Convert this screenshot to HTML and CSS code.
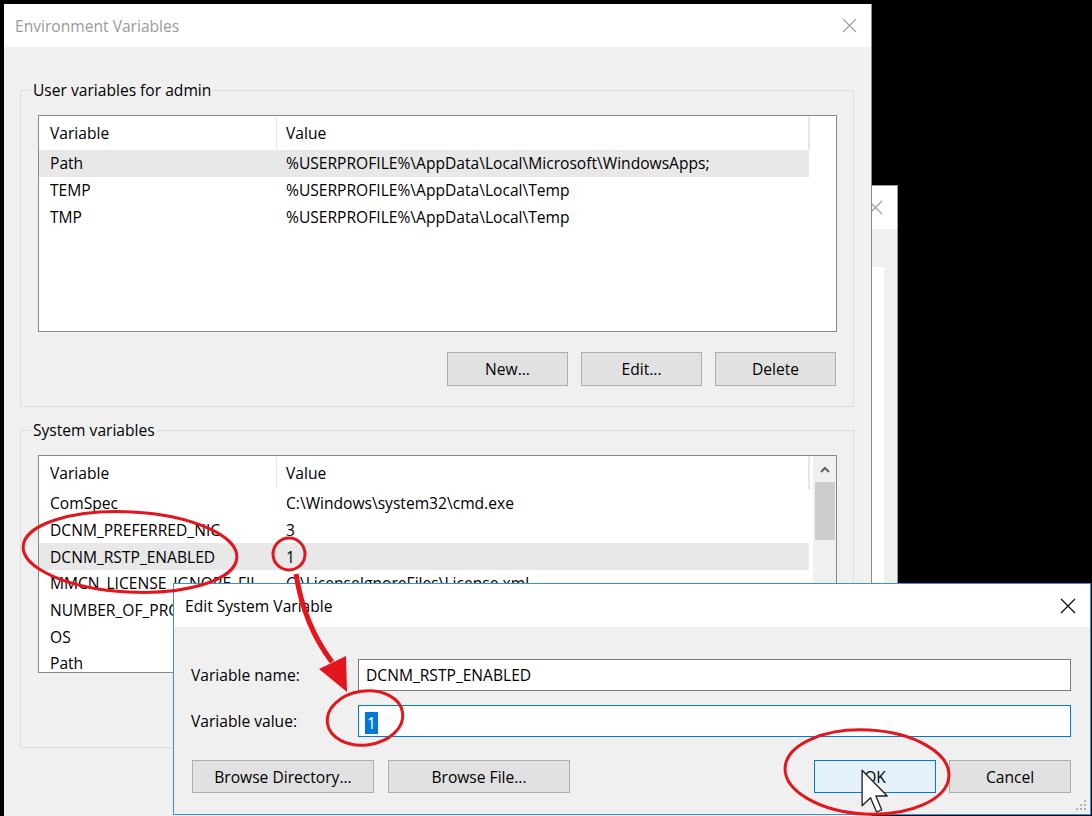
FILE: index.html
```html
<!DOCTYPE html>
<html>
<head>
  <title>Environment Variables</title>
  <link rel="stylesheet" href="styles.css">
</head>
<body>
  <div class="desktop">

    <!-- System Properties window, mostly hidden behind the dialogs -->
    <div class="window back-window">
      <div class="titlebar">
        <span class="caption"></span>
        <span class="close-btn">
          <svg width="15" height="15" viewBox="0 0 15 15"><path d="M1 1L14 14M14 1L1 14" stroke="#a0a0a0" stroke-width="1.2"/></svg>
        </span>
      </div>
      <div class="back-body">
        <div class="back-panel"></div>
      </div>
    </div>

    <!-- Environment Variables dialog -->
    <div class="window env-window">
      <div class="titlebar inactive">
        <span class="caption">Environment Variables</span>
        <span class="close-btn">
          <svg width="15" height="15" viewBox="0 0 15 15"><path d="M1 1L14 14M14 1L1 14" stroke="#a0a0a0" stroke-width="1.2"/></svg>
        </span>
      </div>
      <div class="env-body">
        <fieldset class="group">
          <legend>User variables for admin</legend>
          <div class="listview user-list">
            <div class="lv-main">
              <div class="lv-header">
                <span class="col-name">Variable</span>
                <span class="col-value">Value</span>
              </div>
              <div class="lv-row selected"><span class="col-name">Path</span><span class="col-value">%USERPROFILE%\AppData\Local\Microsoft\WindowsApps;</span></div>
              <div class="lv-row"><span class="col-name">TEMP</span><span class="col-value">%USERPROFILE%\AppData\Local\Temp</span></div>
              <div class="lv-row"><span class="col-name">TMP</span><span class="col-value">%USERPROFILE%\AppData\Local\Temp</span></div>
            </div>
          </div>
          <div class="btn-row">
            <button class="btn">New...</button>
            <button class="btn">Edit...</button>
            <button class="btn">Delete</button>
          </div>
        </fieldset>

        <fieldset class="group sys-group">
          <legend>System variables</legend>
          <div class="listview sys-list">
            <div class="lv-main">
              <div class="lv-header">
                <span class="col-name">Variable</span>
                <span class="col-value">Value</span>
              </div>
              <div class="lv-row"><span class="col-name">ComSpec</span><span class="col-value">C:\Windows\system32\cmd.exe</span></div>
              <div class="lv-row"><span class="col-name">DCNM_PREFERRED_NIC</span><span class="col-value">3</span></div>
              <div class="lv-row selected"><span class="col-name">DCNM_RSTP_ENABLED</span><span class="col-value">1</span></div>
              <div class="lv-row"><span class="col-name">MMCN_LICENSE_IGNORE_FILE_PATH</span><span class="col-value">C:\LicenseIgnoreFiles\License.xml</span></div>
              <div class="lv-row"><span class="col-name">NUMBER_OF_PROCESSORS</span><span class="col-value">4</span></div>
              <div class="lv-row"><span class="col-name">OS</span><span class="col-value">Windows_NT</span></div>
              <div class="lv-row"><span class="col-name">Path</span><span class="col-value">C:\ProgramData\Oracle\Java\javapath;C:\Windows\system32</span></div>
            </div>
            <div class="scrollbar">
              <div class="sb-arrow">
                <svg width="10" height="7" viewBox="0 0 10 7"><path d="M1 6L5 2L9 6" fill="none" stroke="#606060" stroke-width="2"/></svg>
              </div>
              <div class="sb-thumb"></div>
            </div>
          </div>
          <div class="btn-row">
            <button class="btn">New...</button>
            <button class="btn">Edit...</button>
            <button class="btn">Delete</button>
          </div>
        </fieldset>
      </div>
    </div>

    <!-- Edit System Variable dialog -->
    <div class="window edit-window">
      <div class="titlebar">
        <span class="caption">Edit System Variable</span>
        <span class="close-btn">
          <svg width="16" height="16" viewBox="0 0 16 16"><path d="M1 1L15 15M15 1L1 15" stroke="#111" stroke-width="1.3"/></svg>
        </span>
      </div>
      <div class="edit-body">
        <div class="field">
          <label class="field-label">Variable name:</label>
          <div class="textbox">DCNM_RSTP_ENABLED</div>
        </div>
        <div class="field">
          <label class="field-label">Variable value:</label>
          <div class="textbox focused"><span class="sel">1</span></div>
        </div>
        <div class="edit-buttons">
          <button class="btn wide">Browse Directory...</button>
          <button class="btn wide">Browse File...</button>
          <span class="spacer"></span>
          <button class="btn default">OK</button>
          <button class="btn">Cancel</button>
        </div>
        <svg class="grip" width="10" height="10" viewBox="0 0 10 10">
          <rect x="8" y="0" width="2" height="2" fill="#b0b0b0"/>
          <rect x="4" y="4" width="2" height="2" fill="#b0b0b0"/>
          <rect x="8" y="4" width="2" height="2" fill="#b0b0b0"/>
          <rect x="0" y="8" width="2" height="2" fill="#b0b0b0"/>
          <rect x="4" y="8" width="2" height="2" fill="#b0b0b0"/>
          <rect x="8" y="8" width="2" height="2" fill="#b0b0b0"/>
        </svg>
      </div>
    </div>

    <!-- red callouts drawn over the dialogs -->
    <svg class="marks" width="1092" height="816" viewBox="0 0 1092 816">
      <g fill="none" stroke="#e3161d" stroke-width="3">
        <ellipse cx="130" cy="552" rx="107" ry="40" transform="rotate(3 130 552)"/>
        <circle cx="289" cy="554" r="16"/>
        <ellipse cx="365" cy="718" rx="38" ry="27" transform="rotate(-8 365 718)"/>
        <ellipse cx="867" cy="772" rx="82" ry="42" transform="rotate(3 867 772)"/>
        <path d="M296 574 Q304 625 332 662" stroke-width="5"/>
      </g>
      <polygon points="319,669 346,656 347,692" fill="#e3161d"/>
    </svg>

    <svg class="cursor" width="28" height="46" viewBox="0 0 12.6 20.6">
      <path d="M0.5 0.5 L0.5 16.5 L4.3 12.9 L7 19.3 L9.3 18.3 L6.7 12.1 L11.8 12.1 Z" fill="#fff" stroke="#222" stroke-width="0.6" stroke-linejoin="round"/>
    </svg>
  </div>
</body>
</html>
```

FILE: styles.css
```css
body {
  margin: 0;
  background: #000;
  font-family: "Segoe UI", "Open Sans", sans-serif;
  font-size: 15.6px;
  color: #000;
}

.desktop {
  position: relative;
  width: 1092px;
  height: 816px;
  overflow: hidden;
  background: #000;
}

/* windows sit on the desktop at their own places */
.window {
  position: absolute;
  box-sizing: border-box;
  background: #f0f0f0;
}

.back-window {
  left: 620px;
  top: 185px;
  width: 278px;
  height: 430px;
  border: 1px solid #9a9a9a;
}

.env-window {
  left: 4px;
  top: 4px;
  width: 868px;
  height: 840px;
  border-right: 1px solid #8c8c8c;
}

.edit-window {
  left: 173px;
  top: 583px;
  width: 918px;
  height: 232px;
  border: 1px solid #3c8fe0;
}

/* title bars */
.titlebar {
  height: 43px;
  background: #fff;
  display: flex;
  align-items: center;
  justify-content: space-between;
  padding-left: 11px;
}

.titlebar.inactive .caption {
  color: #9a9a9a;
}

.close-btn {
  width: 44px;
  height: 30px;
  display: flex;
  align-items: center;
  justify-content: center;
}

.back-body {
  padding: 38px 13px 0 0;
}

.back-panel {
  height: 320px;
  background: #fff;
}

/* Environment Variables content */
.env-body {
  padding: 0 17px 0 16px;
}

.group {
  margin: 33px 0 0 0;
  padding: 15px 16px 20px 17px;
  border: 1px solid #dcdcdc;
  min-width: 0;
}

.group.sys-group {
  margin-top: 13px;
}

.group legend {
  padding: 0 2px;
  margin-left: -7px;
  line-height: 20px;
}

.listview {
  display: flex;
  height: 217px;
  box-sizing: border-box;
  border: 1px solid #828790;
  background: #fff;
  overflow: hidden;
}

.sys-list {
  height: 218px;
}

.lv-main {
  flex: 1;
}

.lv-header {
  display: flex;
  height: 34px;
  align-items: center;
  border-right: 1px solid #e5e5e5;
  width: 770px;
}

.lv-header .col-name,
.lv-header .col-value {
  border-right: 1px solid #e5e5e5;
  height: 32px;
  line-height: 32px;
}

.lv-row {
  display: flex;
  height: 26.7px;
  align-items: center;
  width: 770px;
}

.lv-row.selected {
  background: #e8e8e8;
}

.col-name {
  box-sizing: border-box;
  width: 238px;
  padding-left: 11px;
  padding-right: 4px;
  white-space: nowrap;
  overflow: hidden;
  text-overflow: ellipsis;
}

.col-value {
  box-sizing: border-box;
  width: 532px;
  padding-left: 9px;
  white-space: nowrap;
  overflow: hidden;
}

.scrollbar {
  width: 23px;
  background: #f0f0f0;
  display: flex;
  flex-direction: column;
  align-items: center;
}

.sb-arrow {
  height: 26px;
  display: flex;
  align-items: center;
  justify-content: center;
}

.sb-thumb {
  width: 20px;
  height: 58px;
  background: #cdcdcd;
}

/* push buttons */
.btn {
  box-sizing: border-box;
  width: 121px;
  height: 34px;
  background: #e1e1e1;
  border: 1px solid #adadad;
  font-family: inherit;
  font-size: 15.6px;
  color: #000;
  padding: 0;
}

.btn-row {
  display: flex;
  justify-content: flex-end;
  gap: 13px;
  margin-top: 20px;
  padding-right: 1px;
}

/* Edit System Variable content */
.edit-body {
  position: relative;
  padding: 32px 19px 0 17px;
  height: 187px;
  box-sizing: border-box;
}

.field {
  display: flex;
  align-items: center;
  margin-bottom: 14px;
}

.field-label {
  width: 167px;
}

.textbox {
  flex: 1;
  box-sizing: border-box;
  height: 32px;
  line-height: 30px;
  border: 1px solid #7a7a7a;
  background: #fff;
  padding-left: 7px;
}

.textbox.focused {
  border-color: #0078d7;
  padding-left: 6px;
}

.sel {
  display: inline-block;
  background: #0078d7;
  color: #fff;
  line-height: 22px;
  padding: 0 2px;
  vertical-align: middle;
}

.edit-buttons {
  display: flex;
  gap: 14px;
  margin-top: 23px;
  padding-left: 1px;
}

.edit-buttons .btn {
  height: 33px;
}

.btn.wide {
  width: 182px;
}

.btn.default {
  width: 122px;
  background: #e5f1fb;
  border-color: #0078d7;
}

.edit-buttons .spacer {
  flex: 1;
}

.edit-buttons .btn:last-child {
  width: 122px;
  margin-left: -1px;
}

.grip {
  position: absolute;
  right: 4px;
  bottom: 4px;
}

/* overlays */
.marks {
  position: absolute;
  left: 0;
  top: 0;
  pointer-events: none;
}

.cursor {
  position: absolute;
  left: 861px;
  top: 769px;
}
```
